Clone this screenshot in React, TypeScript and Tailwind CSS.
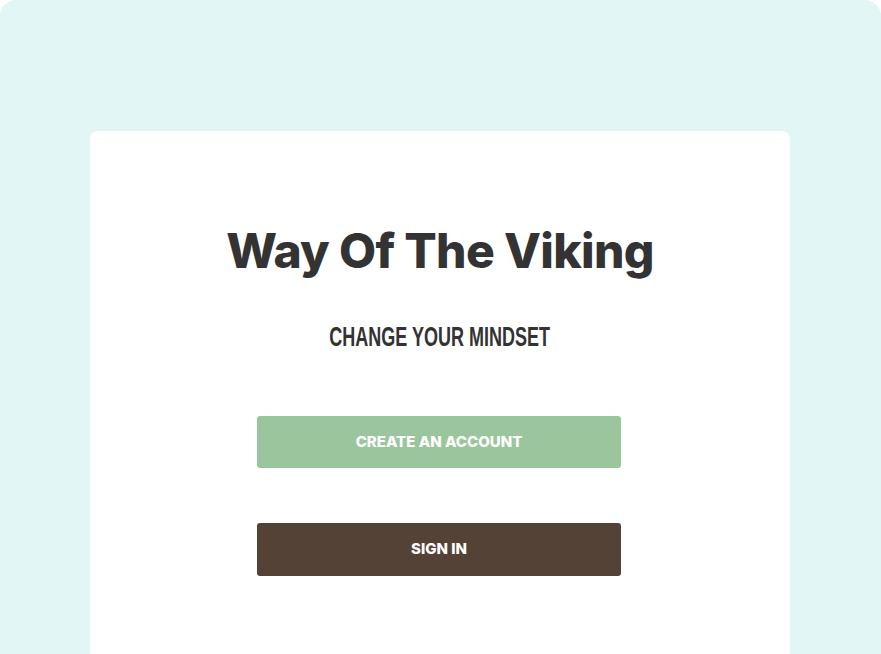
import React from 'react';

const App: React.FC = () => {
  return (
    <div className="h-[654px] w-full overflow-hidden rounded-t-2xl bg-[#e2f6f5] pl-[90px] pt-[131px]">
      <div className="flex h-[600px] w-[700px] flex-col items-center rounded-lg bg-white pt-[92px]">
        <h1 className="text-[48px] font-extrabold leading-[56px] tracking-[-0.65px] text-[#333333] [font-family:Inter,'Noto_Sans',sans-serif]">
          Way Of The Viking
        </h1>
        <h2 className="mt-[42px] inline-block scale-x-[0.643] whitespace-nowrap text-[28px] font-bold uppercase leading-[32px] text-[#333333] [font-family:'Liberation_Sans',Arial,sans-serif]">
          Change your mindset
        </h2>
        <div className="mt-[63px] flex w-[364px] -translate-x-[1px] flex-col gap-[55px]">
          <button className="h-[52px] w-full rounded-[3px] bg-[#9bc69d] text-[15px] font-extrabold uppercase text-white [font-family:Inter,sans-serif]">
            Create an account
          </button>
          <button className="h-[53px] w-full rounded-[3px] bg-[#554236] text-[15px] font-extrabold uppercase text-white [font-family:Inter,sans-serif]">
            Sign in
          </button>
        </div>
      </div>
    </div>
  );
};

export default App;
